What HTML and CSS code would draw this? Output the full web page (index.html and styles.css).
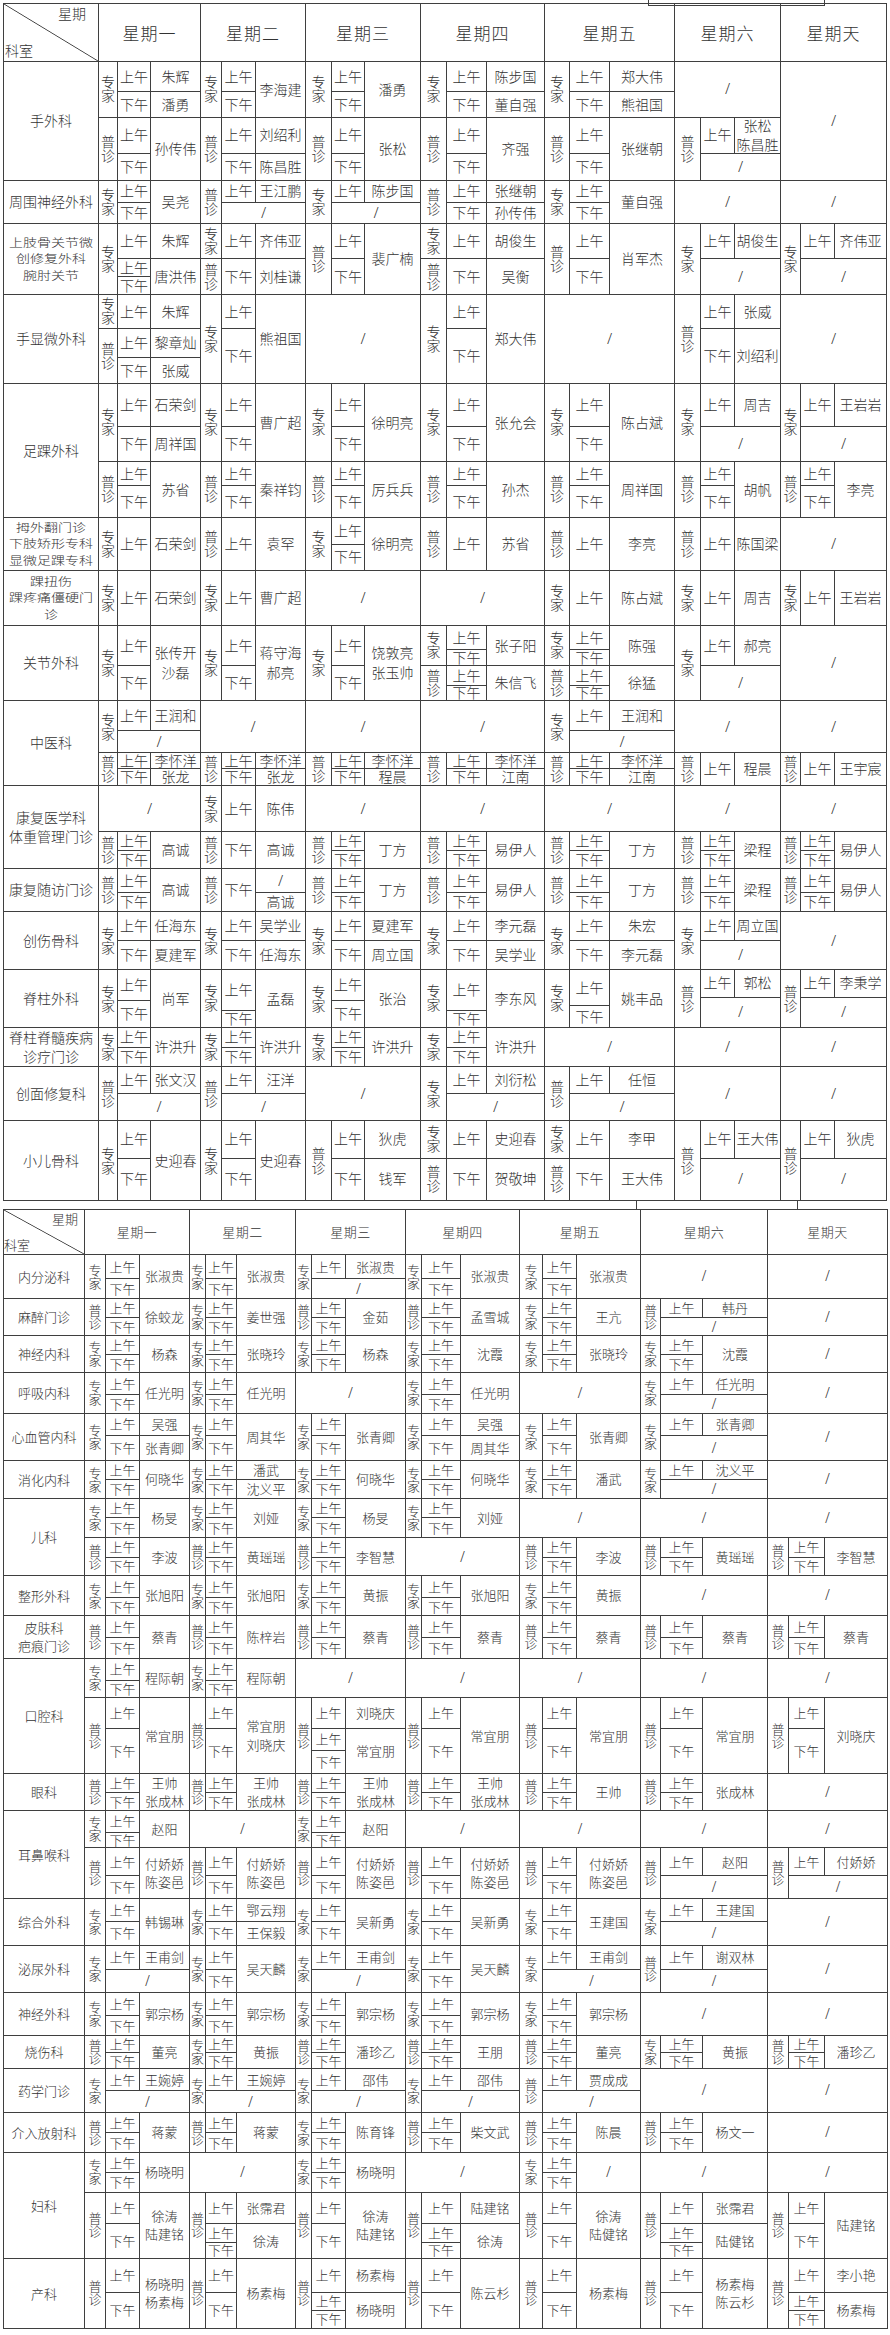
FILE: index.html
```html
<!DOCTYPE html>
<html lang="zh-CN">
<head>
<meta charset="utf-8">
<title>门诊专家排班表</title>
<link rel="stylesheet" href="styles.css">
</head>
<body>
<div class="sheet">
  <div class="mark mark-top"></div>
  <div class="tbl t1" id="t1">
    <div class="c corner"><span class="wk">星期</span><span class="ks">科室</span></div>
    <div class="c hd">星期一</div>
    <div class="c hd">星期二</div>
    <div class="c hd">星期三</div>
    <div class="c hd">星期四</div>
    <div class="c hd">星期五</div>
    <div class="c hd">星期六</div>
    <div class="c hd">星期天</div>
  </div>
  <div class="mark mark-mid"></div>
  <div class="tbl t2" id="t2">
    <div class="c corner"><span class="wk">星期</span><span class="ks">科室</span></div>
    <div class="c hd">星期一</div>
    <div class="c hd">星期二</div>
    <div class="c hd">星期三</div>
    <div class="c hd">星期四</div>
    <div class="c hd">星期五</div>
    <div class="c hd">星期六</div>
    <div class="c hd">星期天</div>
  </div>
</div>
<script src="script.js"></script>
</body>
</html>
```

FILE: styles.css
```css
* { box-sizing: border-box; }
html, body { margin: 0; padding: 0; background: #fff; }
body {
  width: 890px;
  font-family: "Noto Sans CJK SC", "Noto Sans", sans-serif;
  font-weight: 300;
  color: #333;
}
.sheet { position: relative; padding: 3px 0 0 3px; }

.tbl {
  display: grid;
  gap: 1px;
  padding: 1px;
  background: #3f3f3f;
  width: max-content;
}
.t1 {
  font-size: 14px;
  grid-template-columns: 94px 101px 104px 114px 123px 129px 105px 105px;
  grid-template-rows: 57px 118px 42px 70px 88px 133px 52px 54px 74px 84px 82px 42px 57px 57px 38px 53px 79px;
}
.t2 {
  margin-top: 8px;
  font-size: 13px;
  grid-template-columns: 80px 104px 105px 109px 113px 120px 126px 119px;
  grid-template-rows: 44px 43px 36px 36px 40px 46px 37px 76px 39px 42px 114px 36px 87px 46px 46px 42px 32px 43px 39px 105px 69px;
}

.c {
  background: #fff;
  display: flex;
  align-items: center;
  justify-content: center;
  text-align: center;
  line-height: 1.4;
  min-width: 0;
  min-height: 0;
}
.hd { font-size: 17px; letter-spacing: 1px; }
.t2 .hd { font-size: 13px; letter-spacing: 0.5px; }

.corner {
  flex-direction: column;
  justify-content: space-between;
  align-items: stretch;
  padding: 0 12px 0 1px;
  background: #fff linear-gradient(to top right, transparent calc(50% - 0.8px), #3f3f3f 50%, transparent calc(50% + 0.8px));
}
.t2 .corner { padding: 0 6px 0 0; }
.wk { align-self: flex-end; }
.ks { align-self: flex-start; }

.dept { padding: 0 1px; line-height: 1.38; }
.sq {
  display: inline-block;
  transform: scaleY(0.84);
}

.day {
  display: grid;
  gap: 1px;
  background: #3f3f3f;
  min-width: 0;
  min-height: 0;
}
.vt {
  writing-mode: vertical-rl;
  text-orientation: upright;
  line-height: 1;
}
.tm { white-space: nowrap; }
.sl {
  font-family: "Liberation Serif", serif;
  font-size: 17px;
  color: #333;
}
.t2 .sl { font-size: 16px; }

.t1 .d1 { grid-template-columns: 18px 32px minmax(0, 1fr); }
.t1 .d2 { grid-template-columns: 20px 33px minmax(0, 1fr); }
.t1 .d3 { grid-template-columns: 25px 32px minmax(0, 1fr); }
.t1 .d4 { grid-template-columns: 25px 39px minmax(0, 1fr); }
.t1 .d5 { grid-template-columns: 24px 39px minmax(0, 1fr); }
.t1 .d6 { grid-template-columns: 25px 33px minmax(0, 1fr); }
.t1 .d7 { grid-template-columns: 19px 33px minmax(0, 1fr); }

.t2 .d1 { grid-template-columns: 20px 33px minmax(0, 1fr); }
.t2 .d2 { grid-template-columns: 15px 30px minmax(0, 1fr); }
.t2 .d3 { grid-template-columns: 15px 33px minmax(0, 1fr); }
.t2 .d4 { grid-template-columns: 15px 38px minmax(0, 1fr); }
.t2 .d5 { grid-template-columns: 22px 33px minmax(0, 1fr); }
.t2 .d6 { grid-template-columns: 19px 41px minmax(0, 1fr); }
.t2 .d7 { grid-template-columns: 20px 35px minmax(0, 1fr); }

.mark {
  position: absolute;
  border: 1px solid #3f3f3f;
  border-top: none;
}
.mark-top { left: 648px; top: 0; width: 177px; height: 6px; }
.mark-mid { left: 636px; top: 1200px; width: 162px; height: 10px; }
```

FILE: script.js
```js
(function () {
  var TYPE = { '专': '专家', '普': '普诊' };
  var TIME = { '上': '上午', '下': '下午' };

  var T1 = [
    ['手外科', [30, 25, 36, 27], [
      '专 上 朱辉;^ 下 潘勇;普 上 孙传伟;^ 下 ^',
      '专 上 李海建;^ 下 ^;普 上 刘绍利;^ 下 陈昌胜',
      '专 上 潘勇;^ 下 ^;普 上 张松;^ 下 ^',
      '专 上 陈步国;^ 下 董自强;普 上 齐强;^ 下 ^',
      '专 上 郑大伟;^ 下 熊祖国;普 上 张继朝;^ 下 ^',
      '/ < <;=;普 上 张松+陈昌胜;^ / <',
      '/'
    ]],
    ['周围神经外科', [21, 21], [
      '专 上 吴尧;^ 下 ^',
      '普 上 王江鹏;^ / <',
      '专 上 陈步国;^ / <',
      '普 上 张继朝;^ 下 孙传伟',
      '专 上 董自强;^ 下 ^',
      '/', '/'
    ]],
    ['上肢骨关节微+创修复外科+腕肘关节', [35, 17, 17], [
      '专 上 朱辉;^ 上 唐洪伟;^ 下 ^',
      '专 上 齐伟亚;普 下 刘桂谦;=',
      '普 上 裴广楠;^ 下 ^;=',
      '专 上 胡俊生;普 下 吴衡;=',
      '普 上 肖军杰;^ 下 ^;=',
      '专 上 胡俊生;^ / <;=',
      '专 上 齐伟亚;^ / <;='
    ]],
    ['手显微外科', [34, 29, 26], [
      '专 上 朱辉;普 上 黎章灿;^ 下 张威',
      '专 上 熊祖国;^ 下 ^;=',
      '/',
      '专 上 郑大伟;^ 下 ^;=',
      '/',
      '普 上 张威;^ 下 刘绍利;=',
      '/'
    ]],
    ['足踝外科', [43, 35, 24, 32], [
      '专 上 石荣剑;^ 下 周祥国;普 上 苏省;^ 下 ^',
      '专 上 曹广超;^ 下 ^;普 上 秦祥钧;^ 下 ^',
      '专 上 徐明亮;^ 下 ^;普 上 厉兵兵;^ 下 ^',
      '专 上 张允会;^ 下 ^;普 上 孙杰;^ 下 ^',
      '专 上 陈占斌;^ 下 ^;普 上 周祥国;^ 下 ^',
      '专 上 周吉;^ / <;普 上 胡帆;^ 下 ^',
      '专 上 王岩岩;^ / <;普 上 李亮;^ 下 ^'
    ]],
    ['拇外翻门诊+下肢矫形专科+显微足踝专科', [26, 26], [
      '专 上 石荣剑', '普 上 袁罕', '专 上 徐明亮;^ 下 ^', '普 上 苏省', '普 上 李亮', '普 上 陈国梁', '/'
    ]],
    ['踝扭伤+踝疼痛僵硬门+诊', null, [
      '专 上 石荣剑', '专 上 曹广超', '/', '/', '专 上 陈占斌', '专 上 周吉', '专 上 王岩岩'
    ]],
    ['关节外科', [24, 16, 20, 15], [
      '专 上 张传开+沙磊;=;^ 下 ^;=',
      '专 上 蒋守海+郝亮;=;^ 下 ^;=',
      '专 上 饶敦亮+张玉帅;=;^ 下 ^;=',
      '专 上 张子阳;^ 下 ^;普 上 朱信飞;^ 下 ^',
      '专 上 陈强;^ 下 ^;普 上 徐猛;^ 下 ^',
      '专 上 郝亮;=;^ / <;=',
      '/'
    ]],
    ['中医科', [30, 22, 15, 17], [
      '专 上 王润和;^ / <;普 上 李怀洋;^ 下 张龙',
      '/ < <;=;普 上 李怀洋;^ 下 张龙',
      '/ < <;=;普 上 李怀洋;^ 下 程晨',
      '/ < <;=;普 上 李怀洋;^ 下 江南',
      '专 上 王润和;^ / <;普 上 李怀洋;^ 下 江南',
      '/ < <;=;普 上 程晨;=',
      '/ < <;=;普 上 王宇宸;='
    ]],
    ['康复医学科+体重管理门诊', [47, 18, 18], [
      '/ < <;普 上 高诚;^ 下 ^',
      '专 上 陈伟;普 下 高诚;=',
      '/ < <;普 上 丁方;^ 下 ^',
      '/ < <;普 上 易伊人;^ 下 ^',
      '/ < <;普 上 丁方;^ 下 ^',
      '/ < <;普 上 梁程;^ 下 ^',
      '/ < <;普 上 易伊人;^ 下 ^'
    ]],
    ['康复随访门诊', [24, 18], [
      '普 上 高诚;^ 下 ^',
      '普 下 /;^ ^ 高诚',
      '普 上 丁方;^ 下 ^',
      '普 上 易伊人;^ 下 ^',
      '普 上 丁方;^ 下 ^',
      '普 上 梁程;^ 下 ^',
      '普 上 易伊人;^ 下 ^'
    ]],
    ['创伤骨科', [29, 28], [
      '专 上 任海东;^ 下 夏建军',
      '专 上 吴学业;^ 下 任海东',
      '专 上 夏建军;^ 下 周立国',
      '专 上 李元磊;^ 下 吴学业',
      '专 上 朱宏;^ 下 李元磊',
      '专 上 周立国;^ / <',
      '/'
    ]],
    ['脊柱外科', null, [
      '专 上 尚军 31;^ 下 ^ 26',
      '专 上 孟磊 41;^ 下 ^ 16',
      '专 上 张治 31;^ 下 ^ 26',
      '专 上 李东风 41;^ 下 ^ 16',
      '专 上 姚丰品 36;^ 下 ^ 21',
      '普 上 郭松 27;^ / < 30',
      '普 上 李秉学 27;^ / < 30'
    ]],
    ['脊柱脊髓疾病+诊疗门诊', [19, 19], [
      '专 上 许洪升;^ 下 ^', '专 上 许洪升;^ 下 ^', '专 上 许洪升;^ 下 ^', '专 上 许洪升;^ 下 ^', '/', '/', '/'
    ]],
    ['创面修复科', [27, 26], [
      '普 上 张文汉;^ / <', '普 上 汪洋;^ / <', '/', '专 上 刘衍松;^ / <', '普 上 任恒;^ / <', '/', '/'
    ]],
    ['小儿骨科', [37, 42], [
      '专 上 史迎春;^ 下 ^',
      '专 上 史迎春;^ 下 ^',
      '普 上 狄虎;^ 下 钱军',
      '专 上 史迎春;普 下 贺敬坤',
      '专 上 李甲;普 下 王大伟',
      '普 上 王大伟;^ / <',
      '普 上 狄虎;^ / <'
    ]]
  ];

  var T2 = [
    ['内分泌科', [24, 19], [
      '专 上 张淑贵;^ 下 ^', '专 上 张淑贵;^ 下 ^', '专 上 张淑贵;^ / <', '专 上 张淑贵;^ 下 ^', '专 上 张淑贵;^ 下 ^', '/', '/'
    ]],
    ['麻醉门诊', [19, 17], [
      '普 上 徐蛟龙;^ 下 ^', '专 上 姜世强;^ 下 ^', '普 上 金茹;^ 下 ^', '普 上 孟雪城;^ 下 ^', '专 上 王亢;^ 下 ^', '普 上 韩丹;^ / <', '/'
    ]],
    ['神经内科', [19, 17], [
      '专 上 杨森;^ 下 ^', '专 上 张晓玲;^ 下 ^', '专 上 杨森;^ 下 ^', '专 上 沈霞;^ 下 ^', '专 上 张晓玲;^ 下 ^', '专 上 沈霞;^ 下 ^', '/'
    ]],
    ['呼吸内科', [22, 18], [
      '专 上 任光明;^ 下 ^', '专 上 任光明;^ 下 ^', '/', '专 上 任光明;^ 下 ^', '/', '专 上 任光明;^ / <', '/'
    ]],
    ['心血管内科', [21, 25], [
      '专 上 吴强;^ 下 张青卿', '专 上 周其华;^ 下 ^', '专 上 张青卿;^ 下 ^', '专 上 吴强;^ 下 周其华', '专 上 张青卿;^ 下 ^', '专 上 张青卿;^ / <', '/'
    ]],
    ['消化内科', [18, 19], [
      '专 上 何晓华;^ 下 ^', '专 上 潘武;^ 下 沈义平', '专 上 何晓华;^ 下 ^', '专 上 何晓华;^ 下 ^', '专 上 潘武;^ 下 ^', '专 上 沈义平;^ / <', '/'
    ]],
    ['儿科', [19, 20, 19, 18], [
      '专 上 杨旻;^ 下 ^;普 上 李波;^ 下 ^',
      '专 上 刘娅;^ 下 ^;普 上 黄瑶瑶;^ 下 ^',
      '专 上 杨旻;^ 下 ^;普 上 李智慧;^ 下 ^',
      '专 上 刘娅;^ 下 ^;/ < <;=',
      '/ < <;=;普 上 李波;^ 下 ^',
      '/ < <;=;普 上 黄瑶瑶;^ 下 ^',
      '/ < <;=;普 上 李智慧;^ 下 ^'
    ]],
    ['整形外科', [22, 17], [
      '专 上 张旭阳;^ 下 ^', '专 上 张旭阳;^ 下 ^', '专 上 黄振;^ 下 ^', '专 上 张旭阳;^ 下 ^', '专 上 黄振;^ 下 ^', '/', '/'
    ]],
    ['皮肤科+疤痕门诊', [22, 20], [
      '普 上 蔡青;^ 下 ^', '普 上 陈梓岩;^ 下 ^', '普 上 蔡青;^ 下 ^', '普 上 蔡青;^ 下 ^', '普 上 蔡青;^ 下 ^', '普 上 蔡青;^ 下 ^', '普 上 蔡青;^ 下 ^'
    ]],
    ['口腔科', [22, 17, 31, 22, 23], [
      '专 上 程际朝;^ 下 ^;普 上 常宜朋;^ 下 ^;=',
      '专 上 程际朝;^ 下 ^;普 上 常宜朋+刘晓庆;^ 下 ^;=',
      '/ < <;=;普 上 刘晓庆;^ 上 常宜朋;^ 下 ^',
      '/ < <;=;普 上 常宜朋;^ 下 ^;=',
      '/ < <;=;普 上 常宜朋;^ 下 ^;=',
      '/ < <;=;普 上 常宜朋;^ 下 ^;=',
      '/ < <;=;普 上 刘晓庆;^ 下 ^;='
    ]],
    ['眼科', [19, 17], [
      '普 上 王帅+张成林;^ 下 ^', '普 上 王帅+张成林;^ 下 ^', '普 上 王帅+张成林;^ 下 ^', '普 上 王帅+张成林;^ 下 ^', '普 上 王帅;^ 下 ^', '普 上 张成林;^ 下 ^', '/'
    ]],
    ['耳鼻喉科', [22, 15, 28, 23], [
      '专 上 赵阳;^ 下 ^;普 上 付娇娇+陈姿邑;^ 下 ^',
      '/ < <;=;普 上 付娇娇+陈姿邑;^ 下 ^',
      '专 上 赵阳;^ 下 ^;普 上 付娇娇+陈姿邑;^ 下 ^',
      '/ < <;=;普 上 付娇娇+陈姿邑;^ 下 ^',
      '/ < <;=;普 上 付娇娇+陈姿邑;^ 下 ^',
      '/ < <;=;普 上 赵阳;^ / <',
      '/ < <;=;普 上 付娇娇;^ / <'
    ]],
    ['综合外科', [22, 24], [
      '专 上 韩锡琳;^ 下 ^', '专 上 鄂云翔;^ 下 王保毅', '专 上 吴新勇;^ 下 ^', '专 上 吴新勇;^ 下 ^', '专 上 王建国;^ 下 ^', '专 上 王建国;^ / <', '/'
    ]],
    ['泌尿外科', [23, 23], [
      '专 上 王甫剑;^ / <', '专 上 吴天麟;^ 下 ^', '专 上 王甫剑;^ / <', '专 上 吴天麟;^ 下 ^', '专 上 王甫剑;^ / <', '普 上 谢双林;^ / <', '/'
    ]],
    ['神经外科', [23, 19], [
      '专 上 郭宗杨;^ 下 ^', '专 上 郭宗杨;^ 下 ^', '专 上 郭宗杨;^ 下 ^', '专 上 郭宗杨;^ 下 ^', '专 上 郭宗杨;^ 下 ^', '/', '/'
    ]],
    ['烧伤科', [17, 15], [
      '普 上 董亮;^ 下 ^', '专 上 黄振;^ 下 ^', '普 上 潘珍乙;^ 下 ^', '普 上 王朋;^ 下 ^', '普 上 董亮;^ 下 ^', '专 上 黄振;^ 下 ^', '普 上 潘珍乙;^ 下 ^'
    ]],
    ['药学门诊', [22, 21], [
      '专 上 王婉婷;^ / <', '专 上 王婉婷;^ / <', '专 上 邵伟;^ / <', '专 上 邵伟;^ / <', '普 上 贾成成;^ / <', '/', '/'
    ]],
    ['介入放射科', [20, 19], [
      '普 上 蒋蒙;^ 下 ^', '普 上 蒋蒙;^ 下 ^', '专 上 陈育锋;^ 下 ^', '普 上 柴文武;^ 下 ^', '普 上 陈晨;^ 下 ^', '普 上 杨文一;^ 下 ^', '/'
    ]],
    ['妇科', [20, 19, 32, 18, 16], [
      '专 上 杨晓明;^ 下 ^;普 上 徐涛+陆建铭;^ 下 ^;=',
      '/ < <;=;普 上 张霈君;^ 上 徐涛;^ 下 ^',
      '专 上 杨晓明;^ 下 ^;普 上 徐涛+陆建铭;^ 下 ^;=',
      '/ < <;=;普 上 陆建铭;^ 上 徐涛;^ 下 ^',
      '专 上 /;^ 下 ^;普 上 徐涛+陆健铭;^ 下 ^;=',
      '/ < <;=;普 上 张霈君;^ 上 陆健铭;^ 下 ^',
      '/ < <;=;普 上 陆建铭;^ 下 ^;='
    ]],
    ['产科', [34, 17, 18], [
      '普 上 杨晓明+杨素梅;^ 下 ^;=',
      '普 上 杨素梅;^ 下 ^;=',
      '普 上 杨素梅;^ 上 杨晓明;^ 下 ^',
      '普 上 陈云杉;^ 下 ^;=',
      '普 上 杨素梅;^ 下 ^;=',
      '普 上 杨素梅+陈云杉;^ 下 ^;=',
      '普 上 李小艳;^ 上 杨素梅;^ 下 ^'
    ]]
  ];

  function addLines(el, text) {
    text.split('+').forEach(function (p, i) {
      if (i) el.appendChild(document.createElement('br'));
      el.appendChild(document.createTextNode(p));
    });
  }

  function parseRows(spec, defW) {
    var rows = spec.split(';');
    var grid = [], items = [], weights = [];
    rows.forEach(function (row, r) {
      var toks = row.trim().split(/\s+/);
      var w = null;
      if (toks.length > 1 && /^\d+$/.test(toks[toks.length - 1])) w = +toks.pop();
      if (toks[0] === '=') toks = ['^', '^', '^'];
      weights.push(w);
      grid[r] = [];
      for (var c = 0; c < 3; c++) {
        var t = toks[c], it;
        if (t === '^') {
          it = grid[r - 1][c];
          it.r1 = Math.max(it.r1, r + 1);
        } else if (t === '<') {
          it = grid[r][c - 1];
          it.c1 = Math.max(it.c1, c + 1);
        } else {
          it = { t: t, r0: r, r1: r + 1, c0: c, c1: c + 1 };
          items.push(it);
        }
        grid[r][c] = it;
      }
    });
    var useDef = defW && defW.length === rows.length;
    weights = weights.map(function (w, i) {
      return w != null ? w : (useDef ? defW[i] : 1);
    });
    return { items: items, weights: weights };
  }

  function buildDay(spec, defW, di) {
    var day = document.createElement('div');
    day.className = 'day d' + (di + 1);
    if (spec === '/') spec = '/ < <';
    var p = parseRows(spec, defW);
    day.style.gridTemplateRows = p.weights.map(function (w) {
      return 'minmax(0, ' + w + 'fr)';
    }).join(' ');
    p.items.forEach(function (it) {
      var c = document.createElement('div');
      var cls = it.t === '/' ? 'sl' : ['ty', 'tm', 'nm'][it.c0];
      c.className = 'c ' + cls;
      c.style.gridArea = (it.r0 + 1) + ' / ' + (it.c0 + 1) + ' / ' + (it.r1 + 1) + ' / ' + (it.c1 + 1);
      if (it.t === '/') c.textContent = '/';
      else if (it.c0 === 0 && TYPE[it.t]) {
        var v = document.createElement('span');
        v.className = 'vt';
        v.textContent = TYPE[it.t];
        c.appendChild(v);
      }
      else if (it.c0 === 1 && TIME[it.t]) c.textContent = TIME[it.t];
      else addLines(c, it.t);
      day.appendChild(c);
    });
    return day;
  }

  function render(id, data) {
    var tbl = document.getElementById(id);
    data.forEach(function (d) {
      var dept = document.createElement('div');
      dept.className = 'c dept';
      if (d[0].split('+').length > 2) {
        var s = document.createElement('span');
        s.className = 'sq';
        addLines(s, d[0]);
        dept.appendChild(s);
      } else {
        addLines(dept, d[0]);
      }
      tbl.appendChild(dept);
      d[2].forEach(function (s, i) {
        tbl.appendChild(buildDay(s, d[1], i));
      });
    });
  }

  render('t1', T1);
  render('t2', T2);
})();
```
